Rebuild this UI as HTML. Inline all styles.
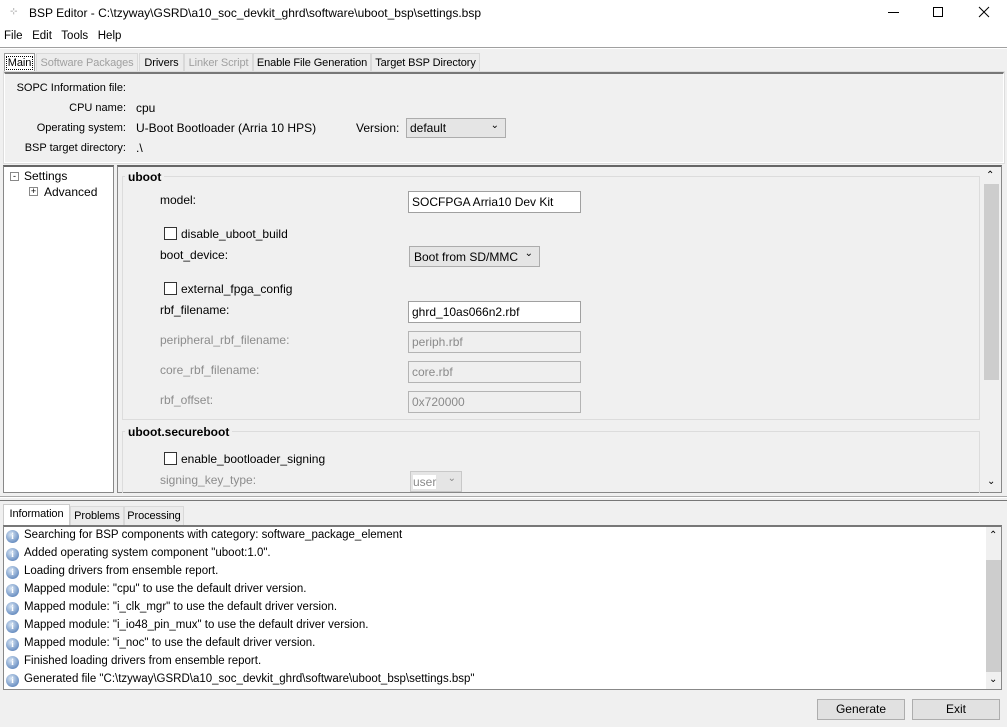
<!DOCTYPE html>
<html><head><meta charset="utf-8"><style>
*{box-sizing:border-box;margin:0;padding:0}
body{width:1007px;height:727px;background:#f0f0f0;font-family:"Liberation Sans",sans-serif;font-size:12px;color:#000;position:relative;overflow:hidden}
.a{position:absolute;white-space:nowrap}
.tab{position:absolute;top:53px;height:19px;border:1px solid #d9d9d9;border-bottom:none;background:#ececec;padding:3px 0 0;font-size:11px;white-space:nowrap;text-align:center;overflow:hidden;letter-spacing:-0.1px}
.dis{color:#a0a0a0}
.lbl{font-size:12px}
.rl{position:absolute;right:881px;white-space:nowrap;font-size:11px;text-align:right}
.inp{position:absolute;height:22px;border:1px solid #a0a0a0;background:#fff;padding:3px 3px;font-size:12px;white-space:nowrap}
.inpd{background:#efefef;border-color:#b4b4b4;color:#8a8a8a}
.cb{position:absolute;width:13px;height:13px;border:1px solid #333;background:#fff}
.gray{color:#8c8c8c}
.ico{position:absolute;left:6px;width:13px;height:13px;border-radius:50%;background:radial-gradient(circle at 40% 35%,#d8e6f5,#6f93c4 70%,#3c63a0);color:#fff;font:bold 9px "Liberation Serif",serif;text-align:center;line-height:13px}
.row{position:absolute;left:24px;font-size:11.5px;white-space:nowrap}
</style></head><body>
<div class="a" style="left:0;top:0;width:1007px;height:48px;background:#fff"></div>
<div class="a" style="left:10px;top:6px;color:#999;font-size:9px">⊹</div>
<div class="a" style="left:29px;top:6px;font-size:12px">BSP Editor - C:\tzyway\GSRD\a10_soc_devkit_ghrd\software\uboot_bsp\settings.bsp</div>
<div class="a" style="left:888px;top:12px;width:11px;height:1px;background:#000"></div>
<div class="a" style="left:933px;top:7px;width:10px;height:10px;border:1px solid #000"></div>
<svg class="a" style="left:978px;top:6px" width="12" height="12"><path d="M1 1L11 11M11 1L1 11" stroke="#000" stroke-width="1"/></svg>
<div class="a" style="left:4px;top:30px;font-size:11.5px">File&nbsp;&nbsp; Edit&nbsp;&nbsp; Tools&nbsp;&nbsp; Help</div>
<div class="a" style="left:0;top:47px;width:1007px;height:2px;border-top:1px solid #a0a0a0;border-bottom:1px solid #fff"></div>

<div class="tab" style="left:4px;width:31px;background:#fff;border-color:#999"><span style="outline:1px dotted #000;padding:0 1px">Main</span></div>
<div class="tab dis" style="left:36px;width:102px">Software Packages</div>
<div class="tab" style="left:139px;width:45px">Drivers</div>
<div class="tab dis" style="left:184px;width:69px">Linker Script</div>
<div class="tab" style="left:253px;width:118px">Enable File Generation</div>
<div class="tab" style="left:371px;width:109px">Target BSP Directory</div>
<div class="a" style="left:4px;top:72px;width:1000px;height:91px;border:1px solid #fff;border-top:2px solid #777;outline:1px solid #ddd"></div>
<div class="rl" style="top:82px">SOPC Information file:</div>
<div class="rl" style="top:102px">CPU name:</div>
<div class="a lbl" style="left:136px;top:101px">cpu</div>
<div class="rl" style="top:122px">Operating system:</div>
<div class="a lbl" style="left:136px;top:121px">U-Boot Bootloader (Arria 10 HPS)</div>
<div class="a lbl" style="left:356px;top:121px">Version:</div>
<div class="inp" style="left:406px;top:118px;width:100px;height:20px;background:#e5e5e5;border-color:#acacac;padding:2px 3px">default<span style="position:absolute;right:6px;top:1px;font-size:10px">&#8964;</span></div>
<div class="rl" style="top:142px">BSP target directory:</div>
<div class="a lbl" style="left:136px;top:141px">.\</div>

<div class="a" style="left:3px;top:165px;width:111px;height:328px;background:#fff;border:1px solid #888;border-top:2px solid #666"></div>
<div class="a" style="left:10px;top:172px;width:9px;height:9px;border:1px solid #888;font-size:9px;line-height:6px;text-align:center">-</div>
<div class="a" style="left:24px;top:169px;font-size:12px">Settings</div>
<div class="a" style="left:29px;top:187px;width:9px;height:9px;border:1px solid #888;font-size:9px;line-height:7px;text-align:center">+</div>
<div class="a" style="left:44px;top:185px;font-size:12px">Advanced</div>
<div class="a" style="left:117px;top:165px;width:885px;height:328px;border:1px solid #888;border-top:2px solid #666"></div>
<div class="a" style="left:983px;top:168px;width:16px;height:323px;background:#f0f0f0"></div>
<div class="a" style="left:986px;top:170px;font-size:10px">&#8963;</div>
<div class="a" style="left:984px;top:184px;width:15px;height:196px;background:#cdcdcd"></div>
<div class="a" style="left:987px;top:476px;font-size:10px">&#8964;</div>
<div class="a" style="left:122px;top:176px;width:858px;height:244px;border:1px solid #dcdcdc"></div>
<div class="a" style="left:125px;top:170px;padding:0 3px;background:#f0f0f0;font-weight:bold;font-size:12px">uboot</div>
<div class="a lbl" style="left:160px;top:193px">model:</div>
<div class="inp" style="left:408px;top:191px;width:173px">SOCFPGA Arria10 Dev Kit</div>
<div class="cb" style="left:164px;top:227px"></div>
<div class="a lbl" style="left:181px;top:227px">disable_uboot_build</div>
<div class="a lbl" style="left:160px;top:248px">boot_device:</div>
<div class="inp" style="left:409px;top:246px;width:131px;height:21px;background:#e5e5e5;border-color:#acacac;padding:3px 4px">Boot from SD/MMC<span style="position:absolute;right:6px;top:1px;font-size:10px">&#8964;</span></div>
<div class="cb" style="left:164px;top:282px"></div>
<div class="a lbl" style="left:181px;top:282px">external_fpga_config</div>
<div class="a lbl" style="left:160px;top:303px">rbf_filename:</div>
<div class="inp" style="left:408px;top:301px;width:173px">ghrd_10as066n2.rbf</div>
<div class="a lbl gray" style="left:160px;top:333px">peripheral_rbf_filename:</div>
<div class="inp inpd" style="left:408px;top:331px;width:173px">periph.rbf</div>
<div class="a lbl gray" style="left:160px;top:363px">core_rbf_filename:</div>
<div class="inp inpd" style="left:408px;top:361px;width:173px">core.rbf</div>
<div class="a lbl gray" style="left:160px;top:393px">rbf_offset:</div>
<div class="inp inpd" style="left:408px;top:391px;width:173px">0x720000</div>
<div class="a" style="left:122px;top:431px;width:858px;height:62px;border:1px solid #dcdcdc;border-bottom:none"></div>
<div class="a" style="left:125px;top:425px;padding:0 3px;background:#f0f0f0;font-weight:bold;font-size:12px">uboot.secureboot</div>
<div class="cb" style="left:164px;top:452px"></div>
<div class="a lbl" style="left:181px;top:452px">enable_bootloader_signing</div>
<div class="a lbl gray" style="left:160px;top:473px">signing_key_type:</div>
<div class="inp" style="left:410px;top:471px;width:52px;height:21px;background:#e5e5e5;border-color:#c8c8c8;color:#8a8a8a;padding:3px 2px"><span style="background:#fff">user</span><span style="position:absolute;right:5px;top:1px;font-size:10px">&#8964;</span></div>

<div class="a" style="left:0;top:496px;width:1007px;height:2px;border-top:1px solid #aaa;border-bottom:1px solid #fff"></div>
<div class="a" style="left:0;top:500px;width:1007px;height:1px;background:#777"></div>
<div class="tab" style="top:504px;left:3px;width:67px;height:21px;background:#fff;border-color:#ccc">Information</div>
<div class="tab" style="top:506px;left:70px;width:54px">Problems</div>
<div class="tab" style="top:506px;left:124px;width:60px">Processing</div>
<div class="a" style="left:3px;top:525px;width:999px;height:165px;background:#fff;border:1px solid #888;border-top:2px solid #777"></div>
<div class="a" style="left:986px;top:527px;width:15px;height:162px;background:#f0f0f0"></div>
<div class="a" style="left:989px;top:530px;font-size:10px">&#8963;</div>
<div class="a" style="left:986px;top:560px;width:15px;height:112px;background:#cdcdcd"></div>
<div class="a" style="left:989px;top:674px;font-size:10px">&#8964;</div>
<div class="ico" style="top:530px">i</div><div class="row" style="top:529px">Searching for BSP components with category: software_package_element</div>
<div class="ico" style="top:548px">i</div><div class="row" style="top:547px">Added operating system component "uboot:1.0".</div>
<div class="ico" style="top:566px">i</div><div class="row" style="top:565px">Loading drivers from ensemble report.</div>
<div class="ico" style="top:584px">i</div><div class="row" style="top:583px">Mapped module: "cpu" to use the default driver version.</div>
<div class="ico" style="top:602px">i</div><div class="row" style="top:601px">Mapped module: "i_clk_mgr" to use the default driver version.</div>
<div class="ico" style="top:620px">i</div><div class="row" style="top:619px">Mapped module: "i_io48_pin_mux" to use the default driver version.</div>
<div class="ico" style="top:638px">i</div><div class="row" style="top:637px">Mapped module: "i_noc" to use the default driver version.</div>
<div class="ico" style="top:656px">i</div><div class="row" style="top:655px">Finished loading drivers from ensemble report.</div>
<div class="ico" style="top:674px">i</div><div class="row" style="top:673px">Generated file "C:\tzyway\GSRD\a10_soc_devkit_ghrd\software\uboot_bsp\settings.bsp"</div>

<div class="a" style="left:817px;top:699px;width:88px;height:21px;background:#e1e1e1;border:1px solid #adadad;text-align:center;line-height:19px">Generate</div>
<div class="a" style="left:912px;top:699px;width:88px;height:21px;background:#e1e1e1;border:1px solid #adadad;text-align:center;line-height:19px">Exit</div>
</body></html>
